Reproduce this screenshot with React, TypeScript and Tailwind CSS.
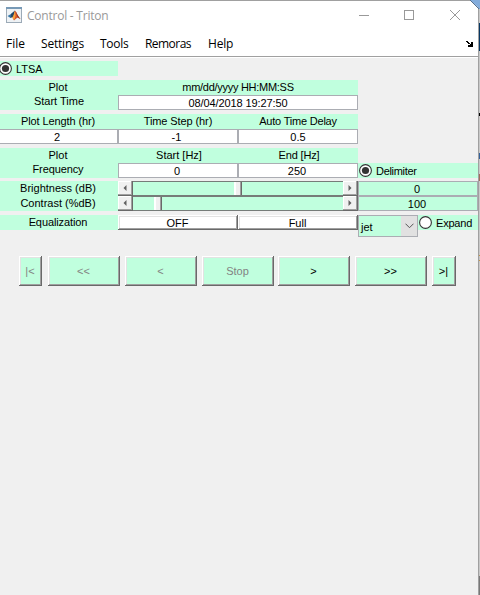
import React from 'react';

const MINT = 'bg-[#c0ffde]';

function Label({ children, className = '' }: { children: React.ReactNode; className?: string }) {
  return <div className={`flex h-[15px] items-center justify-center whitespace-pre leading-[15px] ${className}`}>{children}</div>;
}

function Field({ children, className = '' }: { children: React.ReactNode; className?: string }) {
  return (
    <div className={`flex h-[15px] items-center justify-center border border-[#abadb3] bg-white pt-[2px] leading-[11px] ${className}`}>
      {children}
    </div>
  );
}

function Radio({ checked = false }: { checked?: boolean }) {
  return (
    <svg width="13" height="13" viewBox="0 0 13 13" className="shrink-0">
      <circle cx="6.5" cy="6.5" r="5.9" fill="#fff" stroke="#333" strokeWidth="1.1" />
      {checked && <circle cx="6.5" cy="6.5" r="3.6" fill="#333" />}
    </svg>
  );
}

function Arrow({ right = false }: { right?: boolean }) {
  return (
    <div className="flex h-[15px] w-[15px] shrink-0 items-center justify-center border-b border-r border-[#696969] bg-[#f0f0f0] shadow-[inset_-1px_-1px_#a0a0a0,inset_1px_1px_#fff]">
      <svg width="4" height="6" viewBox="0 0 4 6">
        <path d={right ? 'M0.5 0L3.5 3L0.5 6Z' : 'M3.5 0L0.5 3L3.5 6Z'} fill="#606060" />
      </svg>
    </div>
  );
}

function Slider({ value }: { value: number }) {
  return (
    <div className="flex h-[15px] w-[240px]">
      <Arrow />
      <div className={`flex flex-1 border-y border-[#767c79] ${MINT}`}>
        <div className="shrink-0" style={{ width: value }} />
        <div className="h-[13px] w-[8px] border-r border-[#696969] bg-[#f0f0f0] shadow-[inset_-1px_0_#a0a0a0,inset_2px_0_#fff]" />
      </div>
      <Arrow right />
    </div>
  );
}

function PushButton({ children, className }: { children: React.ReactNode; className: string }) {
  return (
    <button
      className={`flex items-center justify-center border-b border-r border-[#696969] leading-[12px] shadow-[inset_1px_1px_#fff,inset_-1px_-1px_#a0a0a0,inset_2px_2px_#e3e3e3] ${className}`}
    >
      {children}
    </button>
  );
}

function TitleBar() {
  return (
    <div className="flex h-[29px] items-start bg-white pl-[6px] text-[12px] text-[#999]">
      <svg width="16" height="16" viewBox="0 0 16 16" className="mt-[6px] shrink-0">
        <rect x=".5" y=".5" width="15" height="15" fill="#eef2f5" stroke="#9caab7" />
        <path d="M0 0H16V2H0Z" fill="#7799b6" />
        <path d="M1.5 9L5 7L8 4.5L9 3.5L7 9L4.5 11Z" fill="#3978a8" />
        <path d="M5 7L9 3.5L7.5 9.5L4.5 11Z" fill="#244867" />
        <path d="M9 3.5C10.5 5 11.5 9 14.5 12L11.5 10.5L8 13.5L6.3 10.5C8 9 8 5 9 3.5Z" fill="#d9572b" />
        <path d="M9 4L9.5 9L8 13L6.5 10.5C8 8.5 8.2 6 9 4Z" fill="#f5a63c" />
        <path d="M9.5 4C11 6 11.8 9 14.5 12L11.5 10.5Z" fill="#993522" />
      </svg>
      <span className="ml-[5px] mt-[6px] w-[310px] shrink-0 whitespace-nowrap leading-[18px] tracking-[-0.23px]">Control - Triton</span>
      <svg width="110" height="12" viewBox="0 0 110 12" className="ml-[22px] mt-[8px] shrink-0" fill="none" stroke="#999" shapeRendering="crispEdges">
        <path d="M0 6.5H10M45.5 1.5H54.5V10.5H45.5Z" />
        <path d="M91 1L101 11M101 1L91 11" shapeRendering="auto" />
      </svg>
    </div>
  );
}

function MenuBar() {
  return (
    <div className="flex h-[26px] items-center bg-white pl-[6px] pt-[2px] text-[12px] text-black">
      <span className="w-[35px]">File</span>
      <span className="w-[59px] tracking-[-0.2px]">Settings</span>
      <span className="w-[45px] tracking-[-0.3px]">Tools</span>
      <span className="w-[63px] tracking-[-0.55px]">Remoras</span>
      <span className="w-[258px] tracking-[-0.2px]">Help</span>
      <svg width="7" height="6" viewBox="0 0 7 6" shapeRendering="crispEdges" fill="#000">
        <path d="M0 0H2V1H3V2H4V3H5V1H7V6H2V4H4V3H2V2H1V1H0Z" />
      </svg>
    </div>
  );
}

function Controls() {
  return (
    <div className="flex flex-col pt-[3px] font-['Liberation_Sans',Arial,sans-serif] text-[11px] text-black">
      <div className={`flex h-[15px] w-[118px] items-center ${MINT}`}>
        <span className="-ml-px flex"><Radio checked /></span>
        <span className="ml-[4px] pt-[2px] leading-[13px]">LTSA</span>
      </div>

      <div className="mt-[4px] flex h-[30px]">
        <div className={`w-[118px] ${MINT}`}>
          <Label className="pr-[2px]">Plot</Label>
          <Label className="-mt-px">Start Time</Label>
        </div>
        <div className={`w-[240px] ${MINT}`}>
          <Label className="tracking-[-0.28px]">mm/dd/yyyy HH:MM:SS</Label>
          <Field className="tracking-[-0.1px]">08/04/2018 19:27:50</Field>
        </div>
      </div>

      <div className="mt-[4px] grid w-[358px] grid-cols-[118px_120px_120px]">
        <Label className={`pr-[2px] tracking-[-0.1px] ${MINT}`}>Plot Length (hr)</Label>
        <Label className={`tracking-[-0.1px] ${MINT}`}>Time Step (hr)</Label>
        <Label className={`tracking-[-0.2px] ${MINT}`}>Auto Time Delay</Label>
        <Field className="border-l-0 pr-[3px]">2</Field>
        <Field className="pr-[3px]">-1</Field>
        <Field>0.5</Field>
      </div>

      <div className="mt-[4px] flex h-[30px] items-end">
        <div className={`h-[30px] w-[118px] ${MINT}`}>
          <Label className="pr-[2px]">Plot</Label>
          <Label className="-mt-px pr-[2px] tracking-[-0.1px]">Frequency</Label>
        </div>
        <div className={`w-[120px] ${MINT}`}><Label className="pl-[2px]">Start [Hz]</Label><Field className="pr-[2px]">0</Field></div>
        <div className={`w-[120px] ${MINT}`}><Label className="pl-[2px] tracking-[-0.15px]">End [Hz]</Label><Field className="pr-[2px]">250</Field></div>
        <div className={`flex h-[15px] w-[120px] items-center pl-px ${MINT}`}>
          <Radio checked />
          <span className="ml-[4px] pt-[2px] leading-[13px] tracking-[-0.3px]">Delimiter</span>
        </div>
      </div>

      <div className="mt-[3px] flex">
        <div className={`w-[118px] ${MINT}`}>
          <Label className="pr-[2px]">Brightness (dB)</Label>
          <Label className="pr-[2px]">Contrast (%dB)</Label>
        </div>
        <div><Slider value={101} /><Slider value={21} /></div>
        <div className={`w-[120px] ${MINT}`}>
          <div className="flex h-[15px] items-center justify-center border border-[#abadb3] pr-[2px] pt-[2px] leading-[11px]">0</div>
          <div className="flex h-[15px] items-center justify-center border border-[#abadb3] pr-[2px] pt-[2px] leading-[11px]">100</div>
        </div>
      </div>

      <div className="mt-[4px] flex h-[22px] items-start">
        <Label className={`w-[118px] pr-[2px] tracking-[-0.1px] ${MINT}`}>Equalization</Label>
        <PushButton className="h-[15px] w-[120px] bg-white pt-[2px]">OFF</PushButton>
        <PushButton className="h-[15px] w-[120px] bg-white pt-[2px]">Full</PushButton>
        <div className={`flex h-[22px] w-[60px] items-center justify-between border border-[#abadb3] pl-[2px] ${MINT}`}>
          <span className="pt-[2px]">jet</span>
          <span className="flex h-full w-[16px] items-center justify-center bg-[#e1e1e1]">
            <svg width="9" height="6" viewBox="0 0 9 6" fill="none" stroke="#555"><path d="M.5 .7L4.5 4.7L8.5 .7" /></svg>
          </span>
        </div>
        <div className={`flex h-[15px] w-[60px] items-center pl-px ${MINT}`}>
          <Radio />
          <span className="ml-[4px] pt-[2px] leading-[13px] tracking-[-0.2px]">Expand</span>
        </div>
      </div>

      <div className="mt-[19px] flex pl-[19px] text-[#838383]">
        <PushButton className="h-[30px] w-[23px] bg-[#c0ffde] pt-px">|&lt;</PushButton>
        <PushButton className="ml-[6px] h-[30px] w-[72px] bg-[#c0ffde] pt-px">&lt;&lt;</PushButton>
        <PushButton className="ml-[5px] h-[30px] w-[72px] bg-[#c0ffde] pt-px">&lt;</PushButton>
        <PushButton className="ml-[5px] h-[30px] w-[72px] bg-[#c0ffde] pt-px">Stop</PushButton>
        <PushButton className="ml-[4px] h-[30px] w-[72px] bg-[#c0ffde] pt-px text-black">&gt;</PushButton>
        <PushButton className="ml-[5px] h-[30px] w-[72px] bg-[#c0ffde] pt-px text-black">&gt;&gt;</PushButton>
        <PushButton className="ml-[5px] h-[30px] w-[24px] bg-[#c0ffde] pt-px text-black">&gt;|</PushButton>
      </div>
    </div>
  );
}

export default function App() {
  return (
    <div className="relative flex h-[595px] w-[480px] overflow-hidden bg-[#f0f0f0] font-['Open_Sans','Noto_Sans',sans-serif]">
      <div className="w-[478px] border-t border-[#a0a0a0]">
        <TitleBar />
        <MenuBar />
        <div className="h-[2px] border-b border-white bg-[#a0a0a0]" />
        <Controls />
      </div>
      <div className="w-px bg-[#a0a0a0]" />
      <div className="flex w-px flex-col bg-[#c8c8c8]">
        <div className="h-[9px] bg-[#6f9dd0]" />
        <div className="mt-[14px] h-[28px] bg-[#073763]" />
        <div className="mt-[62px] h-[3px] bg-black" />
        <div className="mt-[37px] h-[6px] bg-[#33619b]" />
        <div className="mt-[15px] h-[7px] bg-[#a36b5c]" />
        <div className="mt-[74px] h-px bg-[#c99542]" />
        <div className="mt-[4px] h-px bg-[#c99542]" />
        <div className="mt-[315px] h-[19px] bg-[#777]" />
      </div>
      <svg className="absolute right-0 top-0" width="10" height="10" viewBox="0 0 10 10">
        <path d="M0 0H10V9Z" fill="#83acdb" />
        <path d="M0 0L9 9" stroke="#58708c" />
      </svg>
    </div>
  );
}
